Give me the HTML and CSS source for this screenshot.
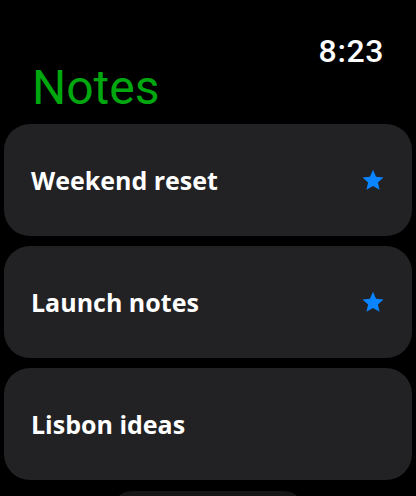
FILE: index.html
```html
<!DOCTYPE html>
<html>
<head>
<meta charset="utf-8">
<link rel="stylesheet" href="styles.css">
</head>
<body>
<div class="screen">
  <header class="top">
    <div class="time">8:23</div>
    <h1 class="title">Notes</h1>
  </header>
  <ul class="list">
    <li class="card">
      <span class="label">Weekend reset</span>
      <svg class="star" viewBox="0 0 24 24" width="24" height="24"><path d="M12 1.8l3.05 6.9 7.5.7-5.66 4.98 1.67 7.37L12 17.9l-6.56 3.85 1.67-7.37L1.45 9.4l7.5-.7z" fill="#0a84ff"/></svg>
    </li>
    <li class="card">
      <span class="label">Launch notes</span>
      <svg class="star" viewBox="0 0 24 24" width="24" height="24"><path d="M12 1.8l3.05 6.9 7.5.7-5.66 4.98 1.67 7.37L12 17.9l-6.56 3.85 1.67-7.37L1.45 9.4l7.5-.7z" fill="#0a84ff"/></svg>
    </li>
    <li class="card">
      <span class="label">Lisbon ideas</span>
    </li>
  </ul>
  <div class="more"></div>
</div>
</body>
</html>
```
FILE: styles.css
```css
html, body {
  margin: 0;
  padding: 0;
  background: #000;
  height: 100%;
  overflow: hidden;
}
.screen {
  width: 416px;
  height: 496px;
  overflow: hidden;
  font-family: Roboto, "Liberation Sans", sans-serif;
  color: #fff;
}
.top {
  padding: 0 32px;
}
.time {
  text-align: right;
  font-size: 32px;
  font-weight: 500;
  line-height: 32px;
  padding-top: 35px;
  letter-spacing: 0.6px;
}
.title {
  margin: 0;
  font-weight: 400;
  font-size: 48px;
  line-height: 48px;
  color: #00a80f;
  margin-top: -3px;
}
.list {
  list-style: none;
  margin: 12px 0 0;
  padding: 0 4px;
  display: flex;
  flex-direction: column;
  gap: 10px;
}
.card {
  height: 112px;
  background: #222224;
  border-radius: 26px;
  display: flex;
  align-items: center;
  justify-content: space-between;
  padding: 0 27px 0 27px;
}
.label {
  font-family: "Open Sans", "Noto Sans", sans-serif;
  font-weight: 700;
  font-size: 25px;
  color: #fff;
}
.star {
  display: block;
}
.more {
  margin: 11px auto 0;
  width: 192px;
  height: 40px;
  background: #161616;
  border-radius: 20px;
}
```
